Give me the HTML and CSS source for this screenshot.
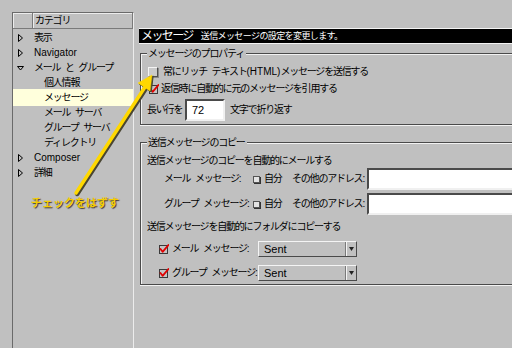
FILE: index.html
```html
<!DOCTYPE html>
<html lang="ja">
<head>
    <meta charset="UTF-8">
    <title>設定 - メッセージ</title>
    <link rel="stylesheet" href="styles.css">
</head>
<body>
    <!-- Category tree -->
    <div class="category-panel">
        <div class="category-head">
            <span class="head-icon"></span>
            <span class="head-name">カテゴリ</span>
        </div>
        <ul class="tree">
            <li class="node"><svg class="twisty" width="8" height="8" viewBox="0 0 8 8"><polygon points="1.5,0.5 5.5,4 1.5,7.5" /></svg>表示</li>
            <li class="node"><svg class="twisty" width="8" height="8" viewBox="0 0 8 8"><polygon points="1.5,0.5 5.5,4 1.5,7.5" /></svg><span class="latin">Navigator</span></li>
            <li class="node"><svg class="twisty" width="8" height="8" viewBox="0 0 8 8"><polygon points="0.5,2.5 6.5,2.5 3.5,6" /></svg>メール と グループ</li>
            <li class="leaf">個人情報</li>
            <li class="leaf selected">メッセージ</li>
            <li class="leaf">メール サーバ</li>
            <li class="leaf">グループ サーバ</li>
            <li class="leaf">ディレクトリ</li>
            <li class="node"><svg class="twisty" width="8" height="8" viewBox="0 0 8 8"><polygon points="1.5,0.5 5.5,4 1.5,7.5" /></svg><span class="latin">Composer</span></li>
            <li class="node"><svg class="twisty" width="8" height="8" viewBox="0 0 8 8"><polygon points="1.5,0.5 5.5,4 1.5,7.5" /></svg>詳細</li>
        </ul>
    </div>

    <!-- Preference page -->
    <div class="prefs">
        <div class="page-title">
            <span class="page-name">メッセージ</span>
            <span class="page-desc">送信メッセージの設定を変更します。</span>
        </div>

        <fieldset class="group props">
            <legend>メッセージのプロパティ</legend>
            <div class="row">
                <span class="check"></span>
                <span>常にリッチ テキスト<span class="latin">(HTML)</span>メッセージを送信する</span>
            </div>
            <div class="row">
                <svg class="tick" width="10" height="10" viewBox="0 0 10 10"><rect x="0.5" y="1.5" width="8" height="8" /><path d="M1.5 5 L3.6 7.8 L9.4 1" /></svg>
                <span>返信時に自動的に元のメッセージを引用する</span>
            </div>
            <div class="row wrap-row">
                <span class="wrap-label">長い行を</span>
                <span class="field short"><span class="latin">72</span></span>
                <span>文字で折り返す</span>
            </div>
        </fieldset>

        <fieldset class="group copies">
            <legend>送信メッセージのコピー</legend>
            <div class="line">送信メッセージのコピーを自動的にメールする</div>
            <div class="addr-row">
                <span class="addr-label">メール メッセージ:</span>
                <span class="mini-check"></span>
                <span class="self">自分</span>
                <span class="other">その他のアドレス:</span>
                <span class="field wide"></span>
            </div>
            <div class="addr-row">
                <span class="addr-label">グループ メッセージ:</span>
                <span class="mini-check"></span>
                <span class="self">自分</span>
                <span class="other">その他のアドレス:</span>
                <span class="field wide"></span>
            </div>
            <div class="line second">送信メッセージを自動的にフォルダにコピーする</div>
            <div class="folder-row">
                <svg class="tick" width="10" height="10" viewBox="0 0 10 10"><rect x="0.5" y="1.5" width="8" height="8" /><path d="M1.5 5 L3.6 7.8 L9.4 1" /></svg>
                <span class="folder-label">メール メッセージ:</span>
                <div class="select">
                    <span class="select-value">Sent</span>
                    <span class="select-btn"><svg width="5" height="4" viewBox="0 0 5 4"><polygon points="0,0 5,0 2.5,4" /></svg></span>
                </div>
            </div>
            <div class="folder-row">
                <svg class="tick" width="10" height="10" viewBox="0 0 10 10"><rect x="0.5" y="1.5" width="8" height="8" /><path d="M1.5 5 L3.6 7.8 L9.4 1" /></svg>
                <span class="folder-label">グループ メッセージ:</span>
                <div class="select">
                    <span class="select-value">Sent</span>
                    <span class="select-btn"><svg width="5" height="4" viewBox="0 0 5 4"><polygon points="0,0 5,0 2.5,4" /></svg></span>
                </div>
            </div>
        </fieldset>
    </div>

    <!-- Callout over the screenshot -->
    <svg class="callout-arrow" width="512" height="348" viewBox="0 0 512 348">
        <g transform="translate(1.2,1)" fill="#4a4632" stroke="#4a4632">
            <line x1="76" y1="193" x2="145" y2="87" stroke-width="4.5" stroke-linecap="round" />
            <polygon points="152,75 150,91 138,83" stroke-width="1" />
        </g>
        <g fill="#ffd800" stroke="#ffd800">
            <line x1="76" y1="193" x2="145" y2="87" stroke-width="3.5" stroke-linecap="round" />
            <polygon points="152,75 150,91 138,83" stroke-width="0.5" />
        </g>
    </svg>
    <div class="callout-label">チェックをはずす</div>
</body>
</html>
```

FILE: styles.css
```css
* {
    box-sizing: border-box;
}

body {
    margin: 0;
    width: 512px;
    height: 348px;
    overflow: hidden;
    position: relative;
    display: flex;
    background: #c0c0c0;
    color: #000;
    font-family: "Liberation Sans", "Noto Sans CJK JP", sans-serif;
    font-size: 10px;
    line-height: 12px;
    letter-spacing: -1.2px;
    word-spacing: 3px;
    white-space: nowrap;
}

.latin {
    letter-spacing: 0;
}

/* Category tree */
.category-panel {
    margin: 12px 0 0 12px;
    width: 122px;
    border-top: 1px solid #6a6a6a;
    border-left: 1px solid #6a6a6a;
    border-right: 1px solid #ececec;
}

.category-head {
    display: flex;
    height: 16px;
    border-bottom: 1px solid #7a7a7a;
}

.head-icon,
.head-name {
    border-right: 1px solid #7a7a7a;
    box-shadow: inset 1px 1px 0 #ececec;
}

.head-icon {
    width: 20px;
}

.head-name {
    flex: 1;
    padding: 2px 0 0 2px;
}

.tree {
    list-style: none;
    margin: 0;
    padding: 1px 0 0;
}

.tree li {
    display: flex;
    align-items: center;
    height: 15px;
}

.tree .node {
    padding-left: 4px;
}

.tree .leaf {
    padding-left: 31px;
}

.tree .selected {
    height: 17px;
    margin: -1px 0;
    background: #ffffdc;
}

.twisty {
    margin-right: 9px;
    fill: none;
    stroke: #000;
    stroke-width: 1;
}

/* Preference page */
.prefs {
    flex: 1;
    margin-left: 5px;
    padding-top: 28px;
    min-width: 0;
}

.page-title {
    display: flex;
    align-items: center;
    height: 16px;
    background: #000;
    border-top: 1px solid #f4f4f4;
    border-bottom: 1px solid #f4f4f4;
    color: #fff;
}

.page-name {
    padding-left: 2px;
    font-size: 12px;
    letter-spacing: -1.6px;
}

.page-desc {
    margin-left: 8px;
    font-size: 9px;
    letter-spacing: -0.6px;
}

.group {
    margin: 3px 0 0 1px;
    padding: 3px 0 3px 6px;
    border: 1px solid #4a4a4a;
    border-right: none;
    box-shadow: inset 1px 1px 0 #f2f2f2, 0 1px 0 #f2f2f2;
    min-width: 0;
}

.group legend {
    padding: 0 2px 0 1px;
    line-height: 13px;
    background: #c0c0c0;
}

.copies {
    margin-top: 11px;
    padding-top: 6px;
    padding-bottom: 3px;
}

.row {
    display: flex;
    align-items: center;
    height: 17px;
}

.check {
    width: 10px;
    height: 10px;
    margin: 0 5px 0 1px;
    background: #cacaca;
    border: 1px solid;
    border-color: #f4f4f4 #505050 #505050 #f4f4f4;
    box-shadow: 1px 1px 0 #8a8a8a;
}

.tick {
    flex-shrink: 0;
}

.tick rect {
    fill: #c4c4c4;
    stroke: #3a3a3a;
    stroke-width: 1;
}

.tick path {
    fill: none;
    stroke: #e00000;
    stroke-width: 1.8;
    stroke-linecap: round;
    stroke-linejoin: round;
}

.row .tick {
    margin: 0 2px 0 2px;
}

.wrap-row {
    height: 22px;
    margin-top: 2px;
}

.wrap-label {
    width: 38px;
}

.field {
    display: flex;
    align-items: center;
    height: 22px;
    background: #fff;
    border: 2px solid;
    border-color: #4a4a4a #f0f0f0 #f0f0f0 #4a4a4a;
    font-size: 11px;
}

.field.short {
    width: 40px;
    margin-right: 5px;
    padding-left: 5px;
}

.field.wide {
    flex: 1;
    margin-left: 2px;
    border-right: none;
}

.line {
    height: 12px;
}

.line.second {
    margin-top: 6px;
}

.addr-row {
    display: flex;
    align-items: center;
    height: 22px;
    margin-top: 1px;
    padding-left: 17px;
}

.addr-row + .addr-row {
    margin-top: 3px;
}

.addr-label {
    width: 89px;
}

.mini-check {
    width: 7px;
    height: 7px;
    margin-right: 4px;
    background: #e4e4e4;
    border: 1px solid #555;
    box-shadow: 1px 1px 0 #333;
}

.self {
    width: 28px;
}

.other {
    width: 73px;
}

.folder-row {
    display: flex;
    align-items: center;
    height: 16px;
    margin-top: 8px;
    padding-left: 12px;
}

.folder-row .tick {
    margin-right: 3px;
}

.folder-label {
    width: 86px;
}

.select {
    display: flex;
    width: 99px;
    height: 16px;
    border: 1px solid;
    border-color: #f4f4f4 #4a4a4a #4a4a4a #f4f4f4;
}

.select-value {
    flex: 1;
    padding: 1px 0 0 5px;
    font-size: 11px;
    letter-spacing: 0;
}

.select-btn {
    display: flex;
    align-items: center;
    justify-content: center;
    width: 11px;
    border-left: 1px solid #7a7a7a;
    box-shadow: inset 1px 0 0 #f4f4f4;
    fill: #222;
}

/* Callout */
.callout-arrow {
    position: absolute;
    left: 0;
    top: 0;
    pointer-events: none;
}

.callout-label {
    position: absolute;
    left: 31px;
    top: 195px;
    font-family: "Noto Sans CJK JP", sans-serif;
    font-size: 11px;
    font-weight: 700;
    line-height: 14px;
    letter-spacing: 0;
    color: #f5cc00;
    text-shadow: 1px 1px 1px #3a3a3a;
}
```
